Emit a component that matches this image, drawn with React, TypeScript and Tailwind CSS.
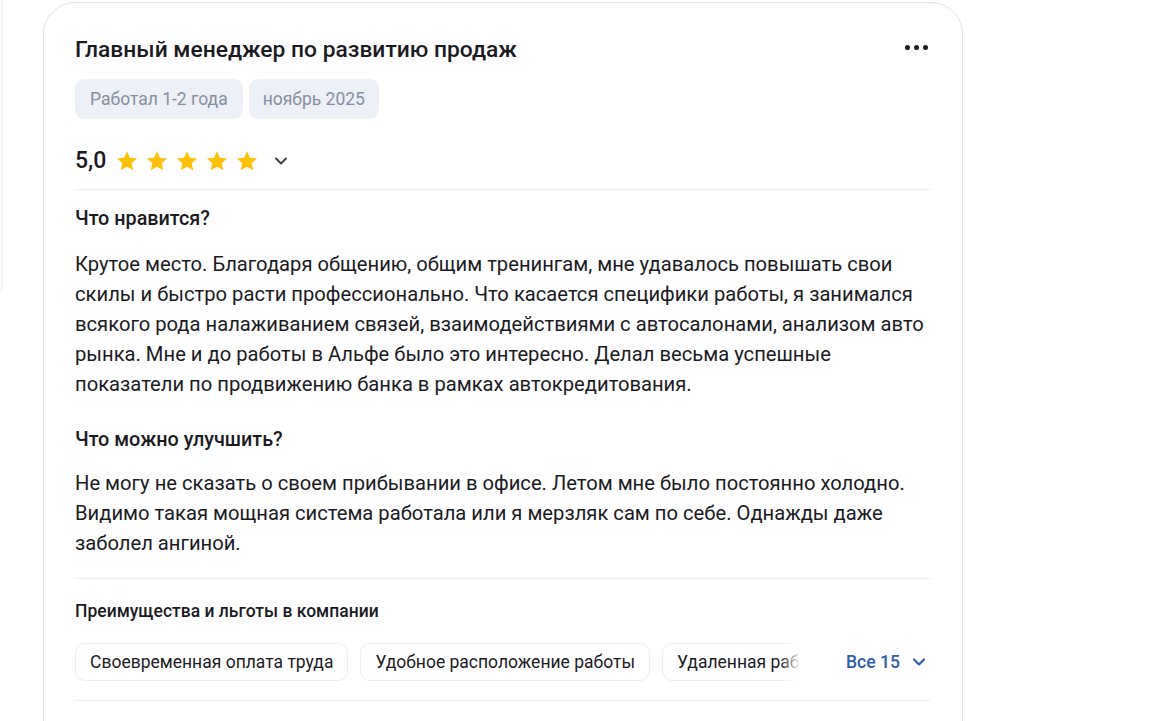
import { ChevronDown } from 'lucide-react';

const font = { fontFamily: 'Roboto, "Noto Sans", sans-serif' };

function Star() {
  return (
    <svg width="24" height="24" viewBox="0 0 24 24" className="shrink-0">
      <path
        d="M12 2.2l2.95 6.55 7.15.72-5.37 4.8 1.53 7.03L12 17.67 5.74 21.3l1.53-7.03L1.9 9.47l7.15-.72z"
        fill="#FFC107"
      />
    </svg>
  );
}

const benefits = ['Своевременная оплата труда', 'Удобное расположение работы', 'Удаленная работа', 'ДМС'];

export default function App() {
  return (
    <div className="relative min-h-[721px] bg-white text-[#1b1b1f]" style={font}>
      {/* край соседней карточки слева */}
      <div className="absolute left-[-20px] top-0 h-[300px] w-[23px] rounded-br-[16px] border-r border-b border-[#eceef4] bg-[#fbfbfd]" />

      <div className="relative ml-[43px] w-[920px] translate-y-[2px] rounded-[32px] border border-[#dfe3ea] bg-white px-[31px] pt-[33px] pb-16">
        {/* Заголовок */}
        <div className="flex items-start justify-between">
          <h2 className="text-[22.8px] leading-[28px] font-medium">Главный менеджер по развитию продаж</h2>
          <button className="mr-[3px] mt-[9px] flex gap-[4px]">
            <span className="h-[5px] w-[5px] rounded-full bg-[#1b1b1f]" />
            <span className="h-[5px] w-[5px] rounded-full bg-[#1b1b1f]" />
            <span className="h-[5px] w-[5px] rounded-full bg-[#1b1b1f]" />
          </button>
        </div>

        <div className="mt-[15px] flex gap-[6px]">
          <span className="rounded-[9px] bg-[#edf0f6] px-[15px] py-[7px] text-[17.5px] leading-[26px] text-[#858fa1]">Работал 1-2 года</span>
          <span className="rounded-[9px] bg-[#edf0f6] px-[14px] py-[7px] text-[17.5px] leading-[26px] text-[#858fa1]">ноябрь 2025</span>
        </div>

        {/* Рейтинг */}
        <div className="mt-7 flex h-[28px] items-center">
          <span className="text-[23px] font-medium leading-[28px]">5,0</span>
          <div className="ml-[9px] flex gap-[6px]">
            <Star />
            <Star />
            <Star />
            <Star />
            <Star />
          </div>
          <ChevronDown className="ml-[12px] text-[#3b3f46]" size={20} strokeWidth={2.3} />
        </div>

        <div className="mt-[14px] h-px bg-[#eef0f3]" />

        <h3 className="mt-[17px] text-[19.8px] font-medium leading-[24px]">Что нравится?</h3>
        <p className="mt-[18px] text-[20.2px] leading-[30px]">
          Крутое место. Благодаря общению, общим тренингам, мне удавалось повышать свои скилы и быстро расти профессионально. Что касается специфики работы, я занимался всякого рода налаживанием связей, взаимодействиями с автосалонами, анализом авто рынка. Мне и до работы в Альфе было это интересно. Делал весьма успешные показатели по продвижению банка в рамках автокредитования.
        </p>

        <h3 className="mt-[29px] text-[19.8px] font-medium leading-[24px]">Что можно улучшить?</h3>
        <p className="mt-[16px] text-[20.2px] leading-[30px]">
          Не могу не сказать о своем прибывании в офисе. Летом мне было постоянно холодно. Видимо такая мощная система работала или я мерзляк сам по себе. Однажды даже заболел ангиной.
        </p>

        <div className="mt-5 h-px bg-[#eef0f3]" />

        <h4 className="mt-5 text-[17.5px] font-medium leading-[24px]">Преимущества и льготы в компании</h4>
        <div className="mt-5 flex items-center">
          <div className="relative w-[731px] overflow-hidden">
            <div className="flex gap-[12px]">
              {benefits.map((b) => (
                <span
                  key={b}
                  className="shrink-0 whitespace-nowrap rounded-[10px] border border-[#eaedf4] px-[14px] py-[5px] text-[17.5px] leading-[26px]"
                >
                  {b}
                </span>
              ))}
            </div>
            <div className="pointer-events-none absolute inset-y-0 right-0 w-[26px] bg-gradient-to-r from-white/0 to-white to-80%" />
          </div>
          <button className="ml-auto mr-[2px] flex items-center gap-[9px] text-[17.6px] font-medium text-[#2f5ea8]">
            Все 15
            <ChevronDown size={20} strokeWidth={2.6} />
          </button>
        </div>

        <div className="mt-[19px] h-px bg-[#eef0f3]" />
      </div>
    </div>
  );
}
